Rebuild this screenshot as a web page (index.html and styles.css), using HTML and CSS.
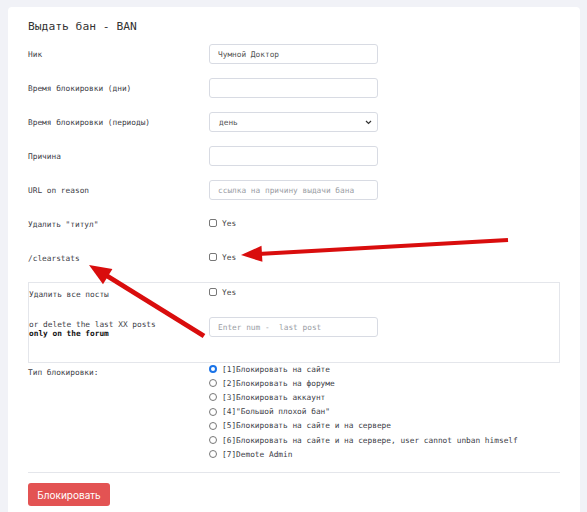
FILE: index.html
```html
<!DOCTYPE html>
<html>
<head>
<meta charset="utf-8">
<link rel="stylesheet" href="styles.css">
</head>
<body>
<div class="page">
  <div class="card">
    <h1 class="title">Выдать бан - BAN</h1>
    <div class="row">
      <div class="label">Ник</div>
      <div class="field"><input class="input" value="Чумной Доктор"></div>
    </div>
    <div class="row">
      <div class="label">Время блокировки (дни)</div>
      <div class="field"><input class="input"></div>
    </div>
    <div class="row">
      <div class="label">Время блокировки (периоды)</div>
      <div class="field">
        <div class="select">день
          <svg class="chev" width="7" height="5" viewBox="0 0 7 5"><path d="M1 1l2.5 2.5L6 1" fill="none" stroke="#333" stroke-width="1.2"/></svg>
        </div>
      </div>
    </div>
    <div class="row">
      <div class="label">Причина</div>
      <div class="field"><input class="input"></div>
    </div>
    <div class="row">
      <div class="label">URL on reason</div>
      <div class="field"><input class="input" placeholder="ссылка на причину выдачи бана"></div>
    </div>
    <div class="row">
      <div class="label">Удалить "титул"</div>
      <div class="field up"><span class="check"></span><span class="yes">Yes</span></div>
    </div>
    <div class="row">
      <div class="label">/clearstats</div>
      <div class="field up"><span class="check"></span><span class="yes">Yes</span></div>
    </div>
    <div class="box">
      <div class="box-row1">
        <div class="label lab-top">Удалить все посты</div>
        <div class="field top"><span class="check"></span><span class="yes">Yes</span></div>
      </div>
      <div class="box-row2">
        <div class="label">or delete the last XX posts<br><b>only on the forum</b></div>
        <div class="field"><input class="input" placeholder="Enter num -  last post"></div>
      </div>
    </div>
    <div class="types">
      <div class="label type-label">Тип блокировки:</div>
      <div class="radios">
        <div class="radio-row"><span class="radio on"></span>[1]Блокировать на сайте</div>
        <div class="radio-row"><span class="radio"></span>[2]Блокировать на форуме</div>
        <div class="radio-row"><span class="radio"></span>[3]Блокировать аккаунт</div>
        <div class="radio-row"><span class="radio"></span>[4]"Большой плохой бан"</div>
        <div class="radio-row"><span class="radio"></span>[5]Блокировать на сайте и на сервере</div>
        <div class="radio-row"><span class="radio"></span>[6]Блокировать на сайте и на сервере, user cannot unban himself</div>
        <div class="radio-row"><span class="radio"></span>[7]Demote Admin</div>
      </div>
    </div>
    <div class="sep"></div>
    <button class="btn">Блокировать</button>
  </div>
  <svg class="arrows" width="587" height="512" viewBox="0 0 587 512">
    <line x1="508" y1="240" x2="258" y2="254" stroke="#d90d0d" stroke-width="4"/>
    <polygon points="241,255 261.5,245.8 262.4,261.8" fill="#d90d0d"/>
    <line x1="204" y1="336" x2="104" y2="274" stroke="#d90d0d" stroke-width="5"/>
    <polygon points="89,265 112.4,268.9 103,284.2" fill="#d90d0d"/>
  </svg>
</div>
</body>
</html>
```
FILE: styles.css
```css
* { box-sizing: border-box; }
html, body { margin: 0; padding: 0; }
body {
  background: #f1f2f7;
  font-family: "DejaVu Sans Mono", "Liberation Mono", monospace;
  font-size: 7.8px;
  color: #3d4047;
  width: 587px;
  height: 512px;
  overflow: hidden;
}
.page { position: relative; padding: 7px 7px 0 8px; }
.card {
  background: #fff;
  border-radius: 4px;
  padding: 12px 20px 10px 20px;
  height: 520px;
}
.title {
  margin: 0 0 9px 0;
  font-size: 11.3px;
  line-height: 16px;
  font-weight: normal;
  color: #333;
}
.row {
  display: grid;
  grid-template-columns: 181px 169px;
  align-items: center;
  height: 20px;
  margin-bottom: 14px;
}
.label { line-height: 9px; }
.field { display: flex; align-items: center; }
.field.up { margin-top: -2px; }
.input, .select {
  width: 169px;
  height: 20px;
  border: 1px solid #d8dbe3;
  border-radius: 3px;
  padding: 0 8px;
  font-family: inherit;
  font-size: 7.8px;
  color: #555;
  outline: none;
  background: #fff;
}
.input::placeholder { color: #9a9da4; }
.select {
  display: flex;
  align-items: center;
  justify-content: space-between;
  padding: 0 5px 0 9px;
}
.chev { display: block; }
.check {
  width: 8px; height: 8px;
  border: 1px solid #777;
  border-radius: 2px;
  margin-right: 5px;
}
.yes { color: #444; }
.box {
  margin-top: 14px;
  border: 1px solid #e4e6eb;
  height: 81px;
  width: 532px;
}
.box-row1 {
  display: grid;
  grid-template-columns: 180px 169px;
  height: 20px;
  padding-top: 4px;
}
.lab-top { padding-top: 3px; }
.field.top { align-items: flex-start; padding-top: 1px; }
.box-row2 {
  display: grid;
  grid-template-columns: 180px 169px;
  align-items: center;
  margin-top: 13px;
  height: 20px;
}
.box-row2 .label { padding-top: 4px; }
.box-row2 b { color: #111; }
.types {
  display: grid;
  grid-template-columns: 181px auto;
  margin-top: -2px;
}
.type-label { padding-top: 7px; }
.radios { padding-top: 1px; }
.radio-row {
  display: flex;
  align-items: center;
  height: 14.2px;
  color: #3d4047;
}
.radio {
  width: 8px; height: 8px;
  border: 1px solid #777;
  border-radius: 50%;
  margin-right: 5px;
}
.radio.on {
  border: 2.5px solid #1a73e8;
  background: #fff;
}
.sep {
  margin-top: 11px;
  border-top: 1px solid #e4e6eb;
  width: 532px;
}
.btn {
  margin-top: 10px;
  width: 82px;
  height: 23px;
  background: #e35353;
  border: none;
  border-radius: 3px;
  color: #fff;
  font-family: "Inter", "Noto Sans", sans-serif;
  font-size: 10px;
  padding: 0;
}
.arrows { position: absolute; left: 0; top: 0; pointer-events: none; }
```
